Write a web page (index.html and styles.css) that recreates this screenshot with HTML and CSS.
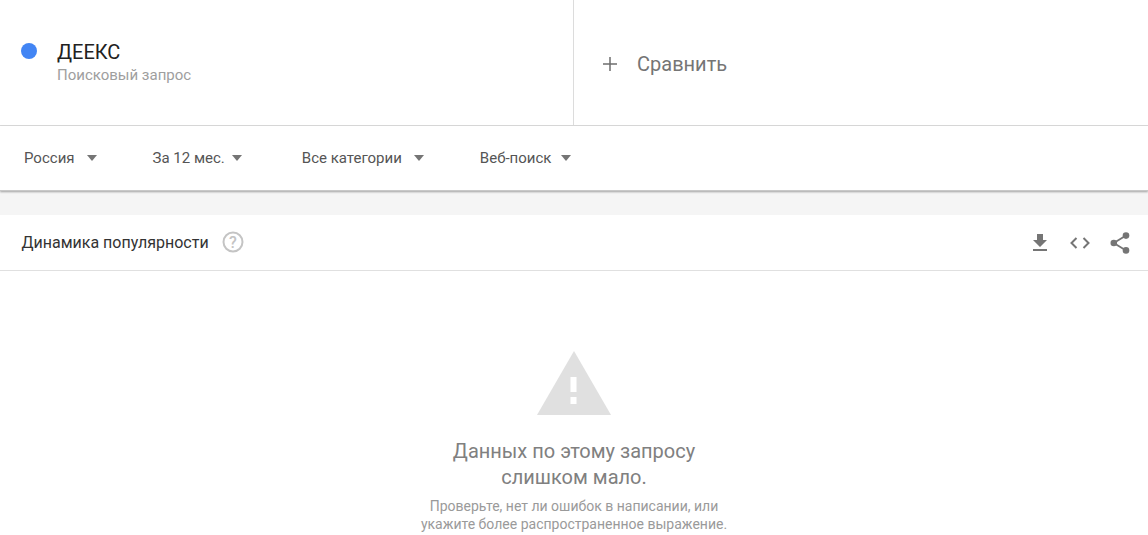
FILE: index.html
```html
<!DOCTYPE html>
<html lang="ru">
<head>
<meta charset="utf-8">
<title>Google Trends</title>
<link rel="stylesheet" href="styles.css">
</head>
<body>
<header class="terms">
  <div class="term">
    <span class="dot"></span>
    <div class="term-text">
      <div class="term-name">ДЕЕКС</div>
      <div class="term-type">Поисковый запрос</div>
    </div>
  </div>
  <div class="compare">
    <svg class="plus" width="16" height="16" viewBox="0 0 16 16"><path d="M7.250 1h1.500v6.250H15v1.500H8.750V15h-1.500V8.750H1v-1.500h6.250z"/></svg>
    <span class="compare-label">Сравнить</span>
  </div>
</header>
<nav class="filters">
  <div class="filter f1"><span>Россия</span><i class="caret"></i></div>
  <div class="filter f2"><span>За 12 мес.</span><i class="caret"></i></div>
  <div class="filter f3"><span>Все категории</span><i class="caret"></i></div>
  <div class="filter f4"><span>Веб-поиск</span><i class="caret"></i></div>
</nav>
<div class="gap"></div>
<section class="card">
  <div class="card-head">
    <h2 class="card-title">Динамика популярности</h2>
    <svg class="help" width="22" height="22" viewBox="0 0 22 22"><circle cx="11" cy="11" r="9.500" fill="none" stroke="#c4c4c4" stroke-width="2"/><text x="11" y="16.500" text-anchor="middle" class="help-q">?</text></svg>
    <div class="actions">
      <svg class="act-download" width="18" height="20" viewBox="0 0 18 20"><path fill="#757575" d="M6 1h6v6h4l-7 7-7-7h4zM2 16h14v2H2z"/></svg>
      <svg width="22" height="14" viewBox="0 0 22 14"><path fill="none" stroke="#757575" stroke-width="2" d="M7.500 2 2.500 7l5 5M14.500 2l5 5-5 5"/></svg>
      <svg width="20" height="22" viewBox="0 0 20 22"><g fill="#757575"><circle cx="16" cy="3.600" r="3.300"/><circle cx="3.800" cy="11" r="3.300"/><circle cx="16" cy="18.400" r="3.300"/></g><path fill="none" stroke="#757575" stroke-width="1.800" d="M16 3.600 3.800 11 16 18.400"/></svg>
    </div>
  </div>
  <div class="empty">
    <svg class="warn" width="74" height="64" viewBox="0 0 74 64"><path fill="#e0e0e0" d="M37 0 74 64H0z"/><path fill="#fff" d="M33.500 26h6v15h-6zM33.500 46h6v7h-6z"/></svg>
    <p class="empty-title">Данных по этому запросу<br>слишком мало.</p>
    <p class="empty-text">Проверьте, нет ли ошибок в написании, или<br>укажите более распространенное выражение.</p>
  </div>
</section>
</body>
</html>
```
FILE: styles.css
```css
* { box-sizing: border-box; }
html, body { margin: 0; padding: 0; }
body {
  width: 1148px;
  height: 535px;
  overflow: hidden;
  background: #fff;
  font-family: Roboto, "Noto Sans", sans-serif;
  color: #333;
}
.terms {
  display: flex;
  height: 126px;
  border-bottom: 1px solid #dcdcdc;
}
.term {
  width: 574px;
  border-right: 1px solid #dcdcdc;
  display: flex;
  align-items: center;
  padding: 0 0 0 21px;
}
.dot {
  width: 16px;
  height: 16px;
  border-radius: 50%;
  background: #4285f4;
  margin-right: 20px;
  margin-top: -23px;
}
.term-text { margin-top: -2px; }
.term-name {
  font-size: 20px;
  line-height: 26px;
  color: #212121;
}
.term-type {
  font-size: 15px;
  line-height: 20px;
  color: #9e9e9e;
}
.compare {
  display: flex;
  align-items: center;
  padding: 2px 0 0 28px;
  flex: 1;
}
.plus { fill: #6e6e6e; margin-right: 19px; }
.compare-label { font-size: 20px; color: #757575; }
.filters {
  display: flex;
  align-items: center;
  height: 65px;
  box-shadow: 0 1px 2px rgba(0,0,0,.35);
  border-bottom: 1px solid #c8c8c8;
  position: relative;
  font-size: 15px;
  color: #555;
}
.filter { display: flex; align-items: center; }
.filter span { margin-right: 12px; }
.f1 { margin-left: 24px; }
.f2 { margin-left: 56px; }
.f2 span { margin-right: 7px; }
.f3 { margin-left: 60px; }
.f3 span { margin-right: 12px; }
.f4 { margin-left: 56px; }
.f4 span { margin-right: 10px; }
.caret {
  width: 0;
  height: 0;
  border-left: 5.500px solid transparent;
  border-right: 5.500px solid transparent;
  border-top: 6px solid #757575;
}
.gap { height: 24px; background: #f5f5f5; }
.card-head {
  display: flex;
  align-items: center;
  height: 56px;
  border-bottom: 1px solid #e0e0e0;
  padding: 0 18px 0 21.500px;
}
.card-title {
  margin: 0 13px 0 0;
  font-size: 16px;
  font-weight: 400;
  color: #333;
}
.help { margin-top: -2px; }
.help-q { font: 500 16px Roboto, sans-serif; fill: #c4c4c4; }
.actions {
  margin-left: auto;
  display: flex;
  align-items: center;
  gap: 19px;
}
.act-download { margin-right: 1px; }
.empty {
  display: flex;
  flex-direction: column;
  align-items: center;
  text-align: center;
  padding-top: 80px;
}
.warn { display: block; margin-bottom: 23px; }
.empty-title {
  margin: 0;
  font-size: 20px;
  line-height: 26px;
  color: #808080;
}
.empty-text {
  margin: 7px 0 0;
  font-size: 14px;
  line-height: 18px;
  color: #9a9a9a;
}
```
